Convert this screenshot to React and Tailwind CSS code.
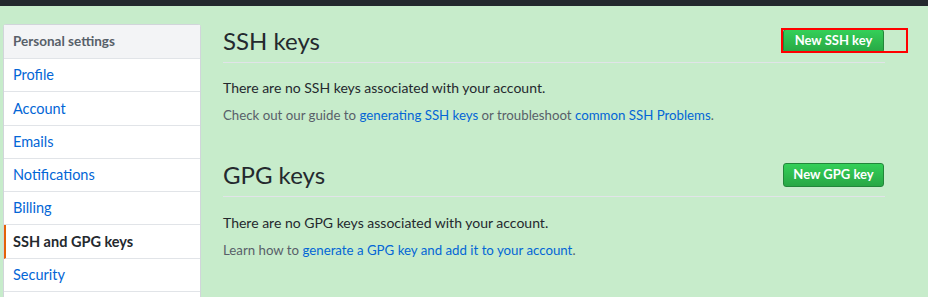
import React from 'react';

const navItems = ['Profile', 'Account', 'Emails', 'Notifications', 'Billing', 'SSH and GPG keys', 'Security', 'Blocked users'];

const Sidebar = () => (
  <nav className="w-[198px] mt-[18px] ml-[3px] border border-[#d1d5da] rounded-t-[3px] bg-white shrink-0">
    <div className="h-[34px] px-[9px] flex items-center bg-[#f3f4f6] border-b border-[#e1e4e8] text-[13.5px] font-bold text-[#586069]">
      Personal settings
    </div>
    {navItems.map((item) => {
      const active = item === 'SSH and GPG keys';
      return (
        <div
          key={item}
          className={
            active
              ? 'h-[33.3px] pl-[7px] flex items-center border-b border-[#e1e4e8] border-l-2 border-l-[#e36209] text-[14.5px] font-bold text-[#24292e]'
              : 'h-[33.3px] px-[9px] flex items-center border-b border-[#e1e4e8] text-[14.5px] text-[#0366d6]'
          }
        >
          {item}
        </div>
      );
    })}
  </nav>
);

const KeySection = ({ title, button, highlight, children }) => (
  <section>
    <div className="h-[40px] pb-[4px] flex items-center justify-between border-b border-[#e1e4e8]">
      <h2 className="text-[24px] leading-[36px] text-[#24292e]">{title}</h2>
      <div className={highlight ? 'relative mr-[1px]' : 'mr-[1px]'}>
        <button className="h-[24px] w-[101px] rounded-[3px] border border-[#22863a] bg-gradient-to-b from-[#34d058] to-[#28a745] text-white text-[13px] font-bold flex items-center justify-center">
          {button}
        </button>
        {highlight && (
          <div className="absolute left-[-2px] top-[-1px] w-[127px] h-[25px] border-2 border-[#ff0000]" />
        )}
      </div>
    </div>
    {children}
  </section>
);

export default function App() {
  return (
    <div className="w-[928px] h-[297px] overflow-hidden bg-[#c7eccb]" style={{ fontFamily: 'Lato, "Noto Sans", sans-serif' }}>
      <div className="h-[6px] bg-[#24292e]" />
      <div className="flex">
        <Sidebar />
        <main className="ml-[22px] w-[662px] pt-[17px]">
          <KeySection title="SSH keys" button="New SSH key" highlight>
            <p className="mt-[14px] text-[14px] leading-[21px] text-[#24292e]">There are no SSH keys associated with your account.</p>
            <p className="mt-[7px] text-[13.25px] leading-[20px] text-[#586069]">
              Check out our guide to <a className="text-[#0366d6]">generating SSH keys</a> or troubleshoot{' '}
              <a className="text-[#0366d6]">common SSH Problems</a>.
            </p>
          </KeySection>
          <div className="mt-[32px]">
            <KeySection title="GPG keys" button="New GPG key">
              <p className="mt-[15px] text-[14px] leading-[21px] text-[#24292e]">There are no GPG keys associated with your account.</p>
              <p className="mt-[7px] text-[13.25px] leading-[20px] text-[#586069]">
                Learn how to <a className="text-[#0366d6]">generate a GPG key and add it to your account</a>.
              </p>
            </KeySection>
          </div>
        </main>
      </div>
    </div>
  );
}
